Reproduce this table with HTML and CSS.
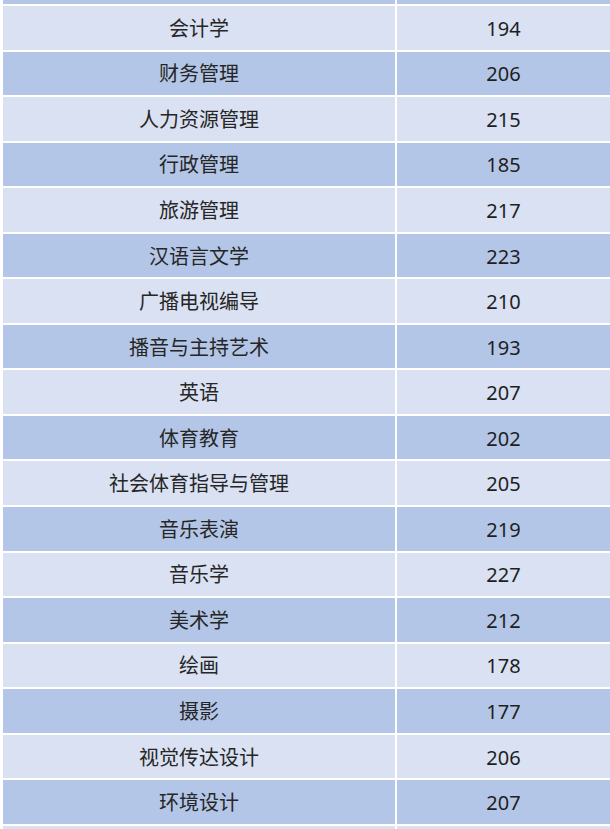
FILE: index.html
```html
<!DOCTYPE html>
<html lang="zh-CN">
<head>
<meta charset="utf-8">
<link rel="stylesheet" href="styles.css">
</head>
<body>
<div class="table">
  <div class="row dark partial-top"><div class="cell"></div><div class="cell"></div></div>
  <div class="row light"><div class="cell">会计学</div><div class="cell num">194</div></div>
  <div class="row dark"><div class="cell">财务管理</div><div class="cell num">206</div></div>
  <div class="row light"><div class="cell">人力资源管理</div><div class="cell num">215</div></div>
  <div class="row dark"><div class="cell">行政管理</div><div class="cell num">185</div></div>
  <div class="row light"><div class="cell">旅游管理</div><div class="cell num">217</div></div>
  <div class="row dark"><div class="cell">汉语言文学</div><div class="cell num">223</div></div>
  <div class="row light"><div class="cell">广播电视编导</div><div class="cell num">210</div></div>
  <div class="row dark"><div class="cell">播音与主持艺术</div><div class="cell num">193</div></div>
  <div class="row light"><div class="cell">英语</div><div class="cell num">207</div></div>
  <div class="row dark"><div class="cell">体育教育</div><div class="cell num">202</div></div>
  <div class="row light"><div class="cell">社会体育指导与管理</div><div class="cell num">205</div></div>
  <div class="row dark"><div class="cell">音乐表演</div><div class="cell num">219</div></div>
  <div class="row light"><div class="cell">音乐学</div><div class="cell num">227</div></div>
  <div class="row dark"><div class="cell">美术学</div><div class="cell num">212</div></div>
  <div class="row light"><div class="cell">绘画</div><div class="cell num">178</div></div>
  <div class="row dark"><div class="cell">摄影</div><div class="cell num">177</div></div>
  <div class="row light"><div class="cell">视觉传达设计</div><div class="cell num">206</div></div>
  <div class="row dark"><div class="cell">环境设计</div><div class="cell num">207</div></div>
  <div class="row light"><div class="cell"></div><div class="cell"></div></div>
</div>
</body>
</html>
```

FILE: styles.css
```css
html, body {
  margin: 0;
  padding: 0;
  background: #ffffff;
}
body {
  width: 610px;
  height: 829px;
  overflow: hidden;
  font-family: "Noto Sans", "Noto Sans CJK SC", sans-serif;
  font-size: 20px;
  color: #262626;
}
.table {
  display: flex;
  flex-direction: column;
  gap: 2px;
  padding-left: 3px;
}
.row {
  display: grid;
  grid-template-columns: 392px 1fr;
  column-gap: 2px;
  height: 43.55px;
}
.row.partial-top {
  height: 4px;
}
.cell {
  display: flex;
  align-items: center;
  justify-content: center;
  padding-top: 2px;
  box-sizing: border-box;
  line-height: 1;
}
.light .cell {
  background: #d9e1f2;
}
.dark .cell {
  background: #b4c6e7;
}
.num {
  color: #1e1e1e;
}
```
